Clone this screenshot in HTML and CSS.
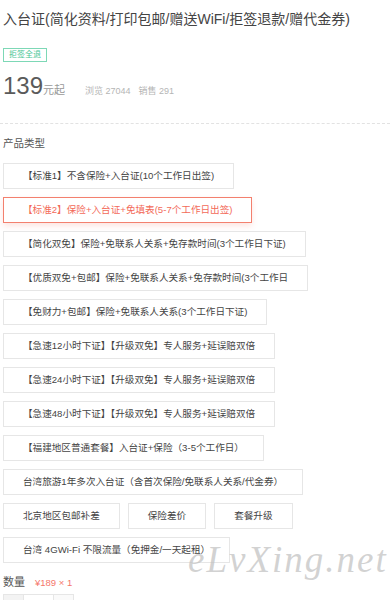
FILE: index.html
```html
<!DOCTYPE html>
<html lang="zh">
<head>
<meta charset="utf-8">
<link rel="stylesheet" href="styles.css">
</head>
<body>
<div class="page">
  <div class="head">
    <h1 class="title">入台证(简化资料/打印包邮/赠送WiFi/拒签退款/赠代金券)</h1>
    <div class="badge-wrap"><span class="badge">拒签全退</span></div>
    <div class="price-row">
      <span class="price">139</span><span class="unit">元起</span>
      <span class="stat">浏览 27044</span><span class="stat">销售 291</span>
    </div>
  </div>
  <div class="divider"></div>
  <div class="section">
    <div class="label">产品类型</div>
    <div class="options">
      <div class="opt">【标准1】不含保险+入台证(10个工作日出签)</div>
      <div class="opt selected">【标准2】保险+入台证+免填表(5-7个工作日出签)</div>
      <div class="opt">【简化双免】保险+免联系人关系+免存款时间(3个工作日下证)</div>
      <div class="opt">【优质双免+包邮】保险+免联系人关系+免存款时间(3个工作日</div>
      <div class="opt">【免财力+包邮】保险+免联系人关系(3个工作日下证)</div>
      <div class="opt">【急速12小时下证】【升级双免】专人服务+延误赔双倍</div>
      <div class="opt">【急速24小时下证】【升级双免】专人服务+延误赔双倍</div>
      <div class="opt">【急速48小时下证】【升级双免】专人服务+延误赔双倍</div>
      <div class="opt">【福建地区普通套餐】入台证+保险（3-5个工作日）</div>
      <div class="opt">台湾旅游1年多次入台证（含首次保险/免联系人关系/代金券）</div>
      <div class="opt-row">
        <div class="opt">北京地区包邮补差</div>
        <div class="opt">保险差价</div>
        <div class="opt">套餐升级</div>
      </div>
      <div class="opt">台湾 4GWi-Fi 不限流量（免押金/一天起租）</div>
    </div>
    <div class="qty-row">
      <span class="qty-label">数量</span>
      <span class="qty-price">¥189 × 1</span>
    </div>
    <div class="stepper">
      <span class="step minus">-</span>
      <span class="step num">1</span>
      <span class="step plus">+</span>
    </div>
  </div>
  <div class="watermark">eLvXing.net</div>
</div>
</body>
</html>
```
FILE: styles.css
```css
html, body {
  margin: 0;
  padding: 0;
  background: #fff;
}
body {
  font-family: "Liberation Sans", "Noto Sans CJK SC", sans-serif;
  color: #444;
}
.page {
  position: relative;
  height: 600px;
  overflow: hidden;
  padding-top: 8px;
  box-sizing: border-box;
}
.head {
  padding: 0 3px;
}
.title {
  margin: 0;
  font-size: 14px;
  line-height: 22px;
  font-weight: normal;
  color: #444;
  white-space: nowrap;
}
.badge-wrap {
  margin-top: 13px;
  height: 14px;
}
.badge {
  display: inline-block;
  box-sizing: border-box;
  height: 14px;
  line-height: 12px;
  padding: 0 5px;
  border: 1px solid #7dd8b6;
  color: #48c596;
  font-size: 8px;
}
.price-row {
  margin-top: 17px;
  display: flex;
  align-items: baseline;
  height: 25px;
}
.price {
  font-size: 24px;
  line-height: 24px;
  color: #5a5a5a;
}
.unit {
  font-size: 11px;
  color: #999;
  margin-right: 20px;
}
.stat {
  font-size: 9px;
  color: #b5b5b5;
  margin-right: 8px;
}
.divider {
  margin-top: 24px;
  border-top: 1px dashed #e2e2e2;
}
.section {
  padding: 0 3px;
}
.label {
  margin-top: 12px;
  font-size: 10.5px;
  line-height: 14px;
  color: #555;
}
.options {
  margin-top: 13px;
  display: flex;
  flex-direction: column;
  align-items: flex-start;
  gap: 8px;
}
.opt {
  box-sizing: border-box;
  height: 26px;
  line-height: 24px;
  padding: 0 19px;
  border: 1px solid #e6e6e6;
  font-size: 9.6px;
  color: #444;
  white-space: nowrap;
  background: #fff;
}
.opt.selected {
  border-color: #f3806e;
  color: #f36a59;
  box-shadow: 0 3px 6px rgba(245, 110, 90, 0.18);
}
.opt-row {
  display: flex;
  gap: 8px;
}
.qty-row {
  margin-top: 12px;
  display: flex;
  align-items: baseline;
  gap: 10px;
  line-height: 14px;
}
.qty-label {
  font-size: 11px;
  color: #555;
}
.qty-price {
  font-size: 9.5px;
  color: #f5766a;
}
.stepper {
  margin-top: 4px;
  display: flex;
}
.step {
  box-sizing: border-box;
  height: 24px;
  line-height: 22px;
  border: 1px solid #e6e6e6;
  text-align: center;
  font-size: 10px;
  color: #888;
}
.minus {
  width: 21px;
  background: #f3f3f3;
}
.num {
  width: 29px;
  border-left: 0;
  border-right: 0;
}
.plus {
  width: 21px;
  background: #fafafa;
}
.watermark {
  position: absolute;
  left: 188px;
  top: 538px;
  font-family: "Liberation Serif", "DejaVu Serif", serif;
  font-style: italic;
  font-size: 37px;
  letter-spacing: 2px;
  color: rgba(190, 190, 190, 0.7);
  white-space: nowrap;
  pointer-events: none;
}
```
